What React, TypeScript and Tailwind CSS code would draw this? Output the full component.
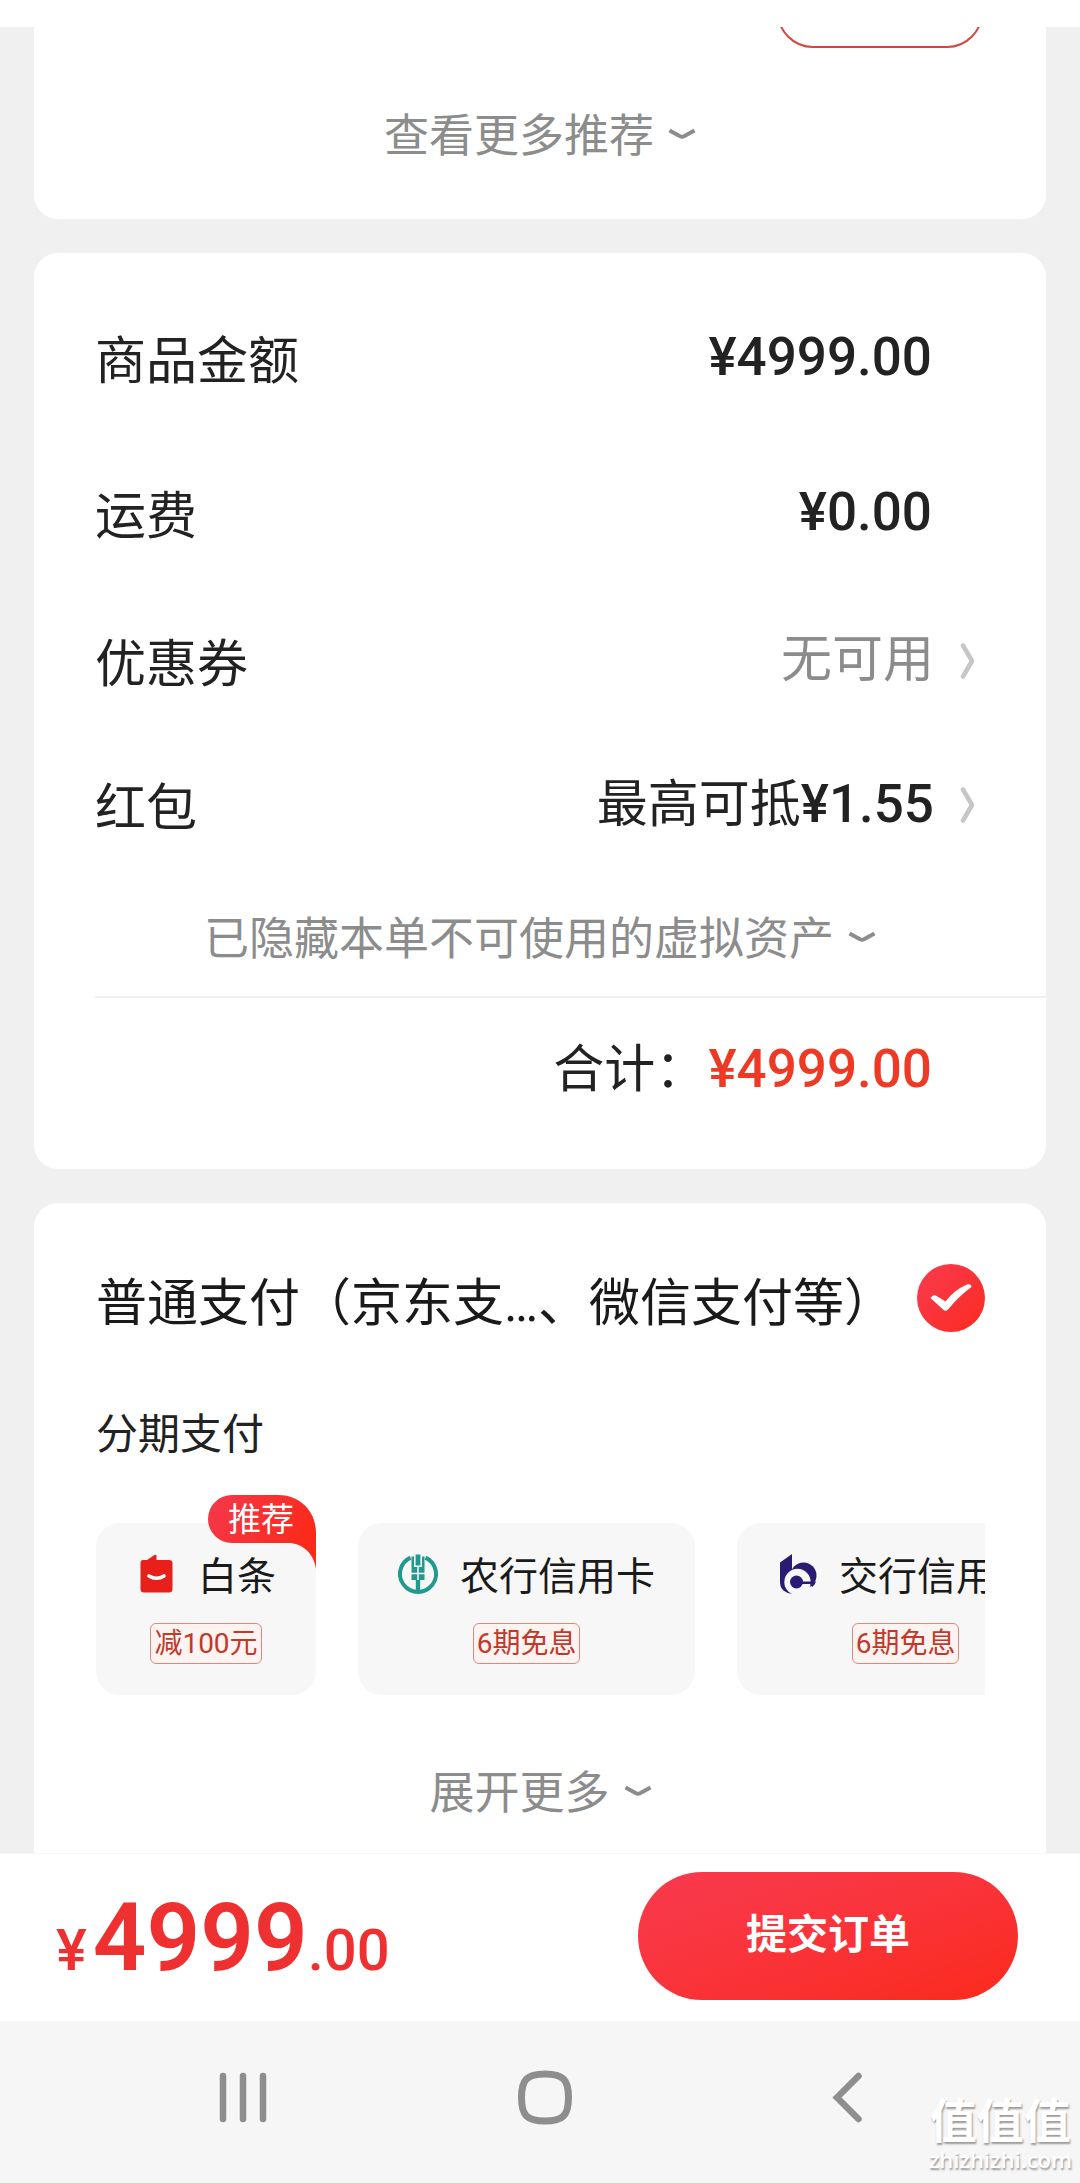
import { useState } from 'react'
import type { ReactNode } from 'react'

function ChevronDown() {
  return (
    <svg className="h-4 w-7" viewBox="0 0 28 16" fill="none" aria-hidden="true">
      <path d="M1.5 3.5 L12 9.2 Q14 10.2 16 9.2 L26.5 3.5" stroke="#8c8c8c" strokeWidth="4" />
    </svg>
  )
}

function ChevronRight() {
  return (
    <svg className="h-9 w-4" viewBox="0 0 16 36" fill="none" aria-hidden="true">
      <path d="M3 2.5 L12 18 L3 33.5" stroke="#c6c6c6" strokeWidth="4.5" strokeLinecap="round" strokeLinejoin="round" />
    </svg>
  )
}

function BaitiaoIcon() {
  return (
    <svg className="mb-1.5 size-10" viewBox="0 0 40 40" aria-hidden="true">
      <path d="M7 6 H11 L18.5 1 Q20.5 0 20.5 2 V6 H33 Q36.5 6 36.5 9 V35 Q36.5 38.5 33 38.5 H8 Q4.5 38.5 4.5 35 V9 Q4.5 6 7 6 Z" fill="#e8201c" />
      <path d="M13 22 Q20.5 26.5 28 22" fill="none" stroke="#fff" strokeWidth="3.6" strokeLinecap="round" />
    </svg>
  )
}

function AbcIcon() {
  return (
    <svg className="mb-1.5 size-10" viewBox="0 0 40 40" fill="none" aria-hidden="true">
      <path d="M12.5 3.6 A18 18 0 1 0 27.5 3.6" stroke="#21998f" strokeWidth="4" />
      <path d="M13.5 2.5 H16 V13 H24 V2.5 H26.5 V26 H22.2 V38 H17.8 V26 H13.5 Z" fill="#21998f" />
      <path d="M17.6 0.5 H22.4 V11.5 H17.6 Z" fill="#21998f" />
      <path d="M20 13 V26 M13 19.5 H27" stroke="#f7f7f7" strokeWidth="1.5" />
    </svg>
  )
}

function BocomIcon() {
  return (
    <svg className="mb-1.5 size-10" viewBox="0 0 40 40" aria-hidden="true">
      <circle cx="26.5" cy="21.5" r="13" fill="#2b1a72" />
      <path d="M3 8.5 L15 0 V24 L16 40 Q3 38.5 3 28 Z" fill="#2b1a72" />
      <circle cx="20.5" cy="28" r="13.2" fill="#f7f7f7" />
      <circle cx="19.5" cy="28" r="6.5" fill="#2b1a72" />
      <path d="M25 27.5 H39 Q38 31 35 33 L33.5 30 H25 Z" fill="#2b1a72" />
    </svg>
  )
}

interface RowProps {
  label: string
  children: ReactNode
  arrow?: boolean
}

function Row({ label, children, arrow }: RowProps) {
  return (
    <div className={`flex items-center justify-between pr-[70px] text-[51px] leading-[74px] ${arrow ? 'pt-9 pb-[34px]' : 'pt-[42px] pb-[38px]'}`}>
      <span>{label}</span>
      {arrow ? (
        <button type="button" className="-my-1 flex items-center gap-[26px] pb-2">
          <span className="-my-1 pb-0.5">{children}</span>
          <ChevronRight />
        </button>
      ) : (
        <span className="-my-1 mr-11 pb-2">{children}</span>
      )}
    </div>
  )
}

function Price({ value }: { value: string }) {
  return <span className="text-[53px] font-medium">¥{value}</span>
}

function MoreButton({ label }: { label: string }) {
  return (
    <button type="button" className="flex items-center gap-3.5 text-[45px] leading-[56px] text-[#8c8c8c]">
      <span className="pt-1">{label}</span>
      <ChevronDown />
    </button>
  )
}

const installments = [
  { name: '白条', tag: '减100元', icon: <BaitiaoIcon />, recommended: true },
  { name: '农行信用卡', tag: '6期免息', icon: <AbcIcon />, recommended: false },
  { name: '交行信用卡', tag: '6期免息', icon: <BocomIcon />, recommended: false },
]

export default function App() {
  const [checked, setChecked] = useState(true)

  return (
    <div className="relative flex min-h-screen flex-col bg-[#f0f0f0] font-['Roboto','Noto_Sans_CJK_SC',sans-serif] text-[#222]">
      <div className="h-[27px] bg-white" />

      <main className="flex flex-1 flex-col gap-[34px] px-[34px]">
        <section className="rounded-b-3xl bg-white pb-[54px]">
          {/* only the lower edge of this button is scrolled into view */}
          <div className="flex h-[21px] items-end justify-end overflow-hidden pr-[63px]">
            <button type="button" aria-label="选择" className="h-[72px] w-[206px] shrink-0 rounded-full border-2 border-[#d4453c]" />
          </div>
          <div className="flex justify-center pt-[57px]">
            <MoreButton label="查看更多推荐" />
          </div>
        </section>

        <section className="rounded-3xl bg-white pt-[29px] pb-7 pl-[61px]">
          <Row label="商品金额">
            <Price value="4999.00" />
          </Row>
          <Row label="运费">
            <Price value="0.00" />
          </Row>
          <Row label="优惠券" arrow>
            <span className="text-[#8c8c8c]">无可用</span>
          </Row>
          <Row label="红包" arrow>
            最高可抵
            <Price value="1.55" />
          </Row>
          <div className="flex justify-center border-b-2 border-[#f0f0f0] py-7 pr-[61px]">
            <MoreButton label="已隐藏本单不可使用的虚拟资产" />
          </div>
          <div className="flex items-center justify-end gap-0.5 py-[34px] pr-[114px] text-[51px] leading-[74px]">
            <span>合计：</span>
            <span className="text-[#ee3a24]">
              <Price value="4999.00" />
            </span>
          </div>
        </section>

        <section className="flex flex-1 flex-col rounded-t-3xl bg-white pt-[61px] pr-[61px] pb-[31px] pl-[62px]">
          <div className="flex items-center justify-between">
            <label htmlFor="pay-normal" className="pt-3 text-[51px] leading-[56px] text-[#1a1a1a]">
              普通支付（京东支…、微信支付等）
            </label>
            <span className="relative size-[68px] shrink-0">
              <input
                id="pay-normal"
                type="checkbox"
                checked={checked}
                onChange={(e) => setChecked(e.target.checked)}
                className="block size-full appearance-none rounded-full border-2 border-gray-300 checked:border-0 checked:bg-linear-to-br checked:from-[#f93a4c] checked:to-[#fb2a1c]"
              />
              {checked && (
                <svg className="pointer-events-none absolute inset-0 size-full" viewBox="0 0 68 68" aria-hidden="true">
                  <path d="M13.5 34 Q16 29.5 20.5 32.5 L28.5 37.5 Q37 26 50 20.5 Q54.5 19.5 54.5 23 Q43 31 31 45.5 Q28.5 48 26 45.5 Z" fill="#fff" />
                </svg>
              )}
            </span>
          </div>

          <h2 className="mt-[73px] text-[42px] leading-[60px]">分期支付</h2>

          <div className="mt-[30px] flex gap-[42px] overflow-hidden pt-7">
            {installments.map((item) => (
              <button
                key={item.name}
                type="button"
                className="relative flex h-[172px] shrink-0 flex-col items-center rounded-3xl bg-[#f7f7f7] px-10 pt-7 text-[#1a1a1a]"
              >
                <span className="flex items-center gap-[22px] text-[39px] leading-[52px] whitespace-nowrap">
                  {item.icon}
                  {item.name}
                </span>
                <span className="mt-5 rounded-md border border-[#d98b82] bg-[#fdf3f1] px-[3px] text-[28px] leading-[39px] text-[#c0392b]">
                  {item.tag}
                </span>
                {item.recommended && (
                  <span className="absolute -top-7 right-0 h-[74px] w-[108px] pl-5 text-left text-[33px] leading-[50px] text-white">
                    <svg className="absolute inset-0 size-full" viewBox="0 0 108 74" aria-hidden="true">
                      <defs>
                        <linearGradient id="ribbon" x1="0" y1="0" x2="1" y2="0.4">
                          <stop offset="0" stopColor="#f4384c" />
                          <stop offset="1" stopColor="#fb2a1a" />
                        </linearGradient>
                      </defs>
                      <path d="M24 0 H70 C92 0 108 16 108 38 V74 C106 58 94 48 80 48 H24 A24 24 0 0 1 24 0 Z" fill="url(#ribbon)" />
                    </svg>
                    <span className="relative">推荐</span>
                  </span>
                )}
              </button>
            ))}
          </div>

          <div className="mt-[67px] flex justify-center">
            <MoreButton label="展开更多" />
          </div>
        </section>
      </main>

      <footer className="flex items-center justify-between border-t border-[#f6f6f6] bg-white pt-[18px] pr-[62px] pb-[21px] pl-14 text-[#ee3030]">
        <p className="flex items-baseline pt-1 text-[58px] leading-none font-medium">
          <span>¥</span>
          <span className="ml-1.5 text-[94px] font-semibold">4999</span>
          <span>.00</span>
        </p>
        <button
          type="button"
          className="h-32 w-[380px] rounded-full bg-linear-to-br from-[#f83a4e] to-[#fb2a18] text-[41px] font-bold text-white"
        >
          提交订单
        </button>
      </footer>

      <nav className="grid h-[162px] grid-cols-3 items-center justify-items-center bg-[#f6f6f6] pr-[82px] pb-2 pl-[92px]">
        <button type="button" aria-label="最近任务">
          <svg className="size-14" viewBox="0 0 56 56" fill="none" stroke="#8e8e8e" strokeWidth="6.5" strokeLinecap="round">
            <path d="M8 6 V49 M28 6 V49 M48 6 V49" />
          </svg>
        </button>
        <button type="button" aria-label="主屏幕">
          <svg className="size-14" viewBox="0 0 56 56" fill="none" stroke="#8e8e8e" strokeWidth="7">
            <path d="M28 4 C46 4 51.5 9.5 51.5 27.5 C51.5 45.5 46 51 28 51 C10 51 4.5 45.5 4.5 27.5 C4.5 9.5 10 4 28 4 Z" />
          </svg>
        </button>
        <button type="button" aria-label="返回">
          <svg className="size-14" viewBox="0 0 56 56" fill="none" stroke="#8e8e8e" strokeWidth="6.5" strokeLinecap="round">
            <path d="M39.5 6 L18 27.5 L39.5 49" />
          </svg>
        </button>
      </nav>

      {/* watermark */}
      <div className="pointer-events-none absolute right-2 bottom-3 flex flex-col items-center text-white [text-shadow:1px_2px_2px_#999]">
        <span className="text-[47px] leading-[50px] font-bold">值值值</span>
        <span className="font-['Open_Sans',sans-serif] text-[22px] leading-[24px] font-semibold">zhizhizhi.com</span>
      </div>
    </div>
  )
}
